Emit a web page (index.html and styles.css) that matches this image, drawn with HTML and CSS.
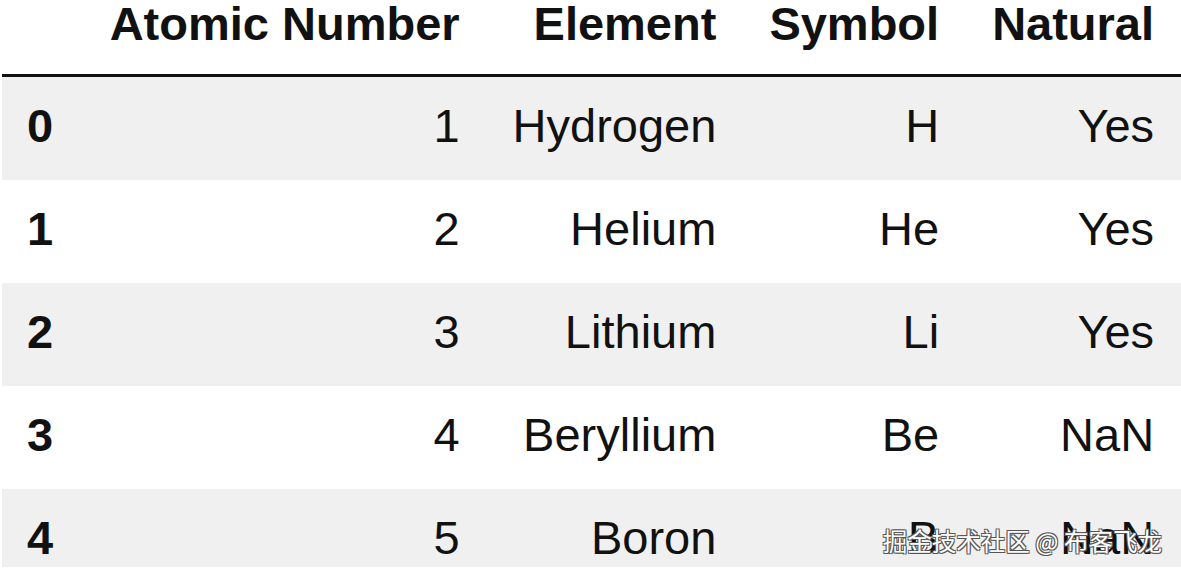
FILE: index.html
```html
<!DOCTYPE html>
<html>
<head>
<meta charset="utf-8">
<link rel="stylesheet" href="styles.css">
</head>
<body>
<div class="frame">
<table class="df">
  <thead>
    <tr><th class="idx"></th><th>Atomic Number</th><th>Element</th><th>Symbol</th><th>Natural</th></tr>
  </thead>
  <tbody>
    <tr class="odd"><th class="idx">0</th><td>1</td><td>Hydrogen</td><td>H</td><td>Yes</td></tr>
    <tr><th class="idx">1</th><td>2</td><td>Helium</td><td>He</td><td>Yes</td></tr>
    <tr class="odd"><th class="idx">2</th><td>3</td><td>Lithium</td><td>Li</td><td>Yes</td></tr>
    <tr><th class="idx">3</th><td>4</td><td>Beryllium</td><td>Be</td><td>NaN</td></tr>
    <tr class="odd last"><th class="idx">4</th><td>5</td><td>Boron</td><td>B</td><td>NaN</td></tr>
  </tbody>
</table>
<div class="watermark">掘金技术社区 @ 布客飞龙</div>
</div>
</body>
</html>
```
FILE: styles.css
```css
html, body {
  margin: 0;
  padding: 0;
  background: #fff;
  overflow: hidden;
}
.frame {
  position: relative;
  width: 1181px;
  height: 572px;
  overflow: hidden;
}
.df {
  border-collapse: collapse;
  margin-left: 2px;
  font-family: "Liberation Sans", Arial, sans-serif;
  font-size: 47px;
  color: #111;
}
.df th, .df td {
  padding: 0 26.5px;
  text-align: right;
  white-space: nowrap;
}
.df thead th {
  font-weight: bold;
  line-height: 40px;
  padding-top: 4px;
  padding-bottom: 30px;
  border-bottom: 3px solid #111;
}
.df tbody th, .df tbody td {
  line-height: 54px;
  padding-top: 22px;
  padding-bottom: 27px;
}
.df tbody th {
  font-weight: bold;
}
.df .idx {
  text-align: left;
  padding-left: 25px;
  padding-right: 30px;
}
.df tbody tr.odd {
  background: #f0f0f0;
}
.df tbody tr.last th, .df tbody tr.last td {
  padding-bottom: 2px;
}
.watermark {
  position: absolute;
  right: 19px;
  top: 524px;
  font-family: "Noto Sans CJK SC", sans-serif;
  font-size: 24.5px;
  line-height: 34px;
  color: #fff;
  text-shadow: -1px -1px 0 #555, 1px -1px 0 #555, -1px 1px 0 #555, 1px 1px 0 #555;
}
```
